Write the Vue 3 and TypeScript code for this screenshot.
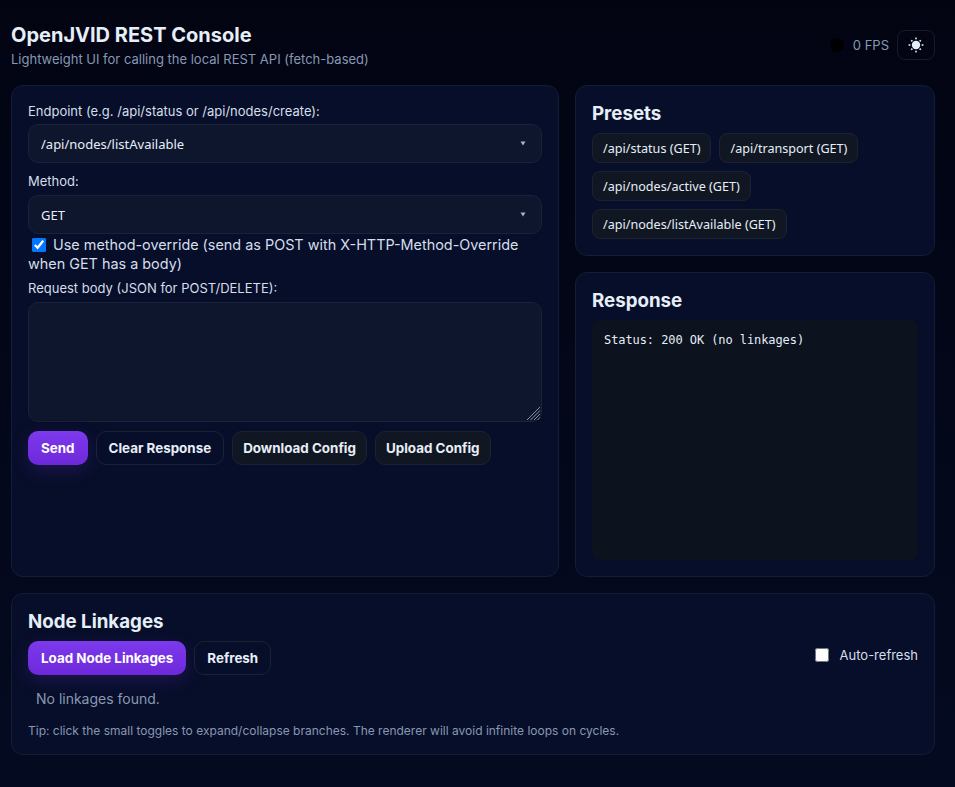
<script setup lang="ts">
import { ref } from 'vue'

const endpoint = ref('/api/nodes/listAvailable')
const method = ref('GET')
const useOverride = ref(true)
const body = ref('')
const autoRefresh = ref(false)

const presets = [
  '/api/status (GET)',
  '/api/transport (GET)',
  '/api/nodes/active (GET)',
  '/api/nodes/listAvailable (GET)',
]
const rays = [0, 45, 90, 135, 180, 225, 270, 315]
</script>

<template>
  <div class="page">
    <header class="top">
      <div>
        <h1>OpenJVID REST Console</h1>
        <p class="sub">Lightweight UI for calling the local REST API (fetch-based)</p>
      </div>
      <div class="top-right">
        <span class="dot"></span>
        <span class="fps">0 FPS</span>
        <button class="theme" type="button" aria-label="Toggle theme">
          <svg width="18" height="18" viewBox="0 0 18 18">
            <circle cx="9" cy="9" r="4.2" fill="#e6eef8" />
            <rect
              v-for="r in rays"
              :key="r"
              x="8.2"
              :y="r % 90 === 0 ? 1.6 : 2.2"
              width="1.6"
              height="1.7"
              fill="#e6eef8"
              :transform="`rotate(${r} 9 9)`"
            />
          </svg>
        </button>
      </div>
    </header>

    <main class="grid">
      <section class="card form">
        <label class="lbl">Endpoint (e.g. /api/status or /api/nodes/create):</label>
        <select v-model="endpoint" class="field pick">
          <option>/api/nodes/listAvailable</option>
          <option>/api/status</option>
          <option>/api/transport</option>
          <option>/api/nodes/active</option>
        </select>
        <label class="lbl method">Method:</label>
        <select v-model="method" class="field pick">
          <option>GET</option>
          <option>POST</option>
          <option>DELETE</option>
        </select>
        <label class="override">
          <input v-model="useOverride" type="checkbox" />
          Use method-override (send as POST with X-HTTP-Method-Override when GET has a body)
        </label>
        <label class="lbl body-lbl">Request body (JSON for POST/DELETE):</label>
        <textarea v-model="body" class="field area"></textarea>
        <div class="actions">
          <button class="btn primary" type="button">Send</button>
          <button class="btn ghost" type="button">Clear Response</button>
          <button class="btn" type="button">Download Config</button>
          <button class="btn" type="button">Upload Config</button>
        </div>
      </section>

      <div class="side">
        <section class="card presets">
          <h2>Presets</h2>
          <div class="chips">
            <button v-for="p in presets" :key="p" class="chip" type="button">{{ p }}</button>
          </div>
        </section>
        <section class="card response">
          <h2>Response</h2>
          <pre class="out">Status: 200 OK (no linkages)</pre>
        </section>
      </div>
    </main>

    <section class="card links">
      <h2>Node Linkages</h2>
      <div class="link-bar">
        <div class="link-btns">
          <button class="btn primary" type="button">Load Node Linkages</button>
          <button class="btn ghost" type="button">Refresh</button>
        </div>
        <label class="auto">
          <input v-model="autoRefresh" type="checkbox" />
          Auto-refresh
        </label>
      </div>
      <p class="empty">No linkages found.</p>
      <p class="tip">Tip: click the small toggles to expand/collapse branches. The renderer will avoid infinite loops on cycles.</p>
    </section>
  </div>
</template>

<style>
html,
body {
  margin: 0;
  min-height: 100%;
  background: #030617;
}
</style>

<style scoped>
.page {
  box-sizing: border-box;
  min-height: 787px;
  padding: 20px 20px 32px 11px;
  font-family: Inter, "Liberation Sans", sans-serif;
  color: #e6eef8;
  background: linear-gradient(180deg, #020412 0%, #040a20 100%);
  color-scheme: dark;
}
.top {
  display: flex;
  justify-content: space-between;
  align-items: center;
  height: 47px;
  margin-bottom: 18px;
}
h1 {
  margin: 0;
  font-size: 20px;
  line-height: 30px;
  font-weight: 700;
}
.sub {
  margin: 0;
  font-size: 13px;
  line-height: 18px;
  color: #8798b3;
}
.top-right {
  display: flex;
  align-items: center;
  margin-top: 2px;
}
.dot {
  width: 14px;
  height: 14px;
  border-radius: 50%;
  background: #000;
  margin-right: 9px;
}
.fps {
  font-size: 13px;
  color: #8798b3;
  margin-right: 8px;
}
.theme {
  width: 38px;
  height: 30px;
  display: flex;
  align-items: center;
  justify-content: center;
  padding: 0;
  background: transparent;
  border: 1px solid #141b2d;
  border-radius: 8px;
}
.grid {
  display: grid;
  grid-template-columns: 1fr 360px;
  gap: 16px;
}
.card {
  box-sizing: border-box;
  background: #070e29;
  border: 1px solid #141d33;
  border-radius: 12px;
  padding: 16px;
}
.form {
  height: 492px;
  display: flex;
  flex-direction: column;
  align-items: stretch;
}
.lbl {
  font-size: 13px;
  line-height: 18px;
  margin-bottom: 4px;
  color: #d5deea;
}
.method {
  margin-top: 9px;
  margin-bottom: 5px;
}
.field {
  box-sizing: border-box;
  width: 100%;
  background: #0e162d;
  border: 1px solid #192238;
  border-radius: 10px;
  color: #e6eef8;
  font-size: 13px;
  font-family: "Noto Sans", sans-serif;
  height: 39px;
  padding: 0 12px;
  outline: none;
}
.pick {
  appearance: none;
  background-image: url("data:image/svg+xml,%3Csvg xmlns='http://www.w3.org/2000/svg' width='6' height='5'%3E%3Cpath d='M0.5 0.5h5L3 4.5z' fill='%23a9b4c4'/%3E%3C/svg%3E");
  background-repeat: no-repeat;
  background-position: right 15px center;
}
.override {
  font-size: 14.4px;
  line-height: 18px;
  color: #d5deea;
  margin-top: 1px;
}
.override input {
  margin: 3px 3px 3px 4px;
  width: 14px;
  height: 14px;
  vertical-align: -2px;
  color-scheme: light;
}
.body-lbl {
  margin-top: 6px;
}
.area {
  height: 120px;
  resize: vertical;
  margin-top: 1px;
  padding: 10px 12px;
}
.area::-webkit-resizer {
  background: url("data:image/svg+xml,%3Csvg xmlns='http://www.w3.org/2000/svg' width='15' height='15'%3E%3Cpath d='M1 14L14 1M4.5 14L14 4.5M8 14L14 8M11.5 14L14 11.5' stroke='%238791a3' stroke-width='1'/%3E%3C/svg%3E") no-repeat;
}
.actions {
  display: flex;
  gap: 8px;
  margin-top: 9px;
}
.btn {
  height: 34px;
  padding: 0 10px;
  border: 1px solid #1a2233;
  border-radius: 10px;
  background: #111722;
  color: #e6eef8;
  font-family: Inter, sans-serif;
  font-size: 13.4px;
  font-weight: 700;
}
.ghost {
  background: transparent;
  padding: 0 12px;
}
.primary {
  border: 0;
  padding: 0 13px;
  color: #fff;
  background: linear-gradient(180deg, #7c3aed, #6d28d9);
  box-shadow: 0 6px 18px rgba(124, 58, 237, 0.18);
}
.side {
  display: flex;
  flex-direction: column;
  gap: 16px;
}
h2 {
  margin: 0;
  font-size: 18.72px;
  line-height: 24px;
  font-weight: 700;
}
.presets {
  height: 171px;
}
.chips {
  display: flex;
  flex-wrap: wrap;
  gap: 8px;
  margin-top: 7px;
}
.chip {
  height: 30px;
  padding: 0 10px;
  border: 1px solid #1a2233;
  border-radius: 8px;
  background: #111722;
  color: #e6eef8;
  font-family: "Noto Sans", sans-serif;
  font-size: 12.6px;
}
.response {
  flex: 1;
  display: flex;
  flex-direction: column;
}
.out {
  flex: 1;
  margin: 7px 0 0;
  padding: 12px;
  background: #0c121e;
  border-radius: 8px;
  font-family: "DejaVu Sans Mono", monospace;
  font-size: 12px;
  letter-spacing: -0.08px;
  line-height: 16px;
  color: #e6eef8;
}
.links {
  margin-top: 16px;
  height: 162px;
}
.link-bar {
  display: flex;
  justify-content: space-between;
  align-items: center;
  margin-top: 7px;
}
.link-btns {
  display: flex;
  gap: 8px;
}
.auto {
  display: flex;
  align-items: center;
  gap: 11px;
  margin-bottom: 6px;
  font-size: 13px;
  color: #d5deea;
}
.auto input {
  margin: 0;
  width: 14px;
  height: 14px;
  color-scheme: light;
}
.empty {
  margin: 15px 0 0 8px;
  font-size: 14px;
  line-height: 18px;
  color: #8798b3;
}
.tip {
  margin: 15px 0 0;
  font-size: 12px;
  line-height: 16px;
  color: #8798b3;
}
</style>
